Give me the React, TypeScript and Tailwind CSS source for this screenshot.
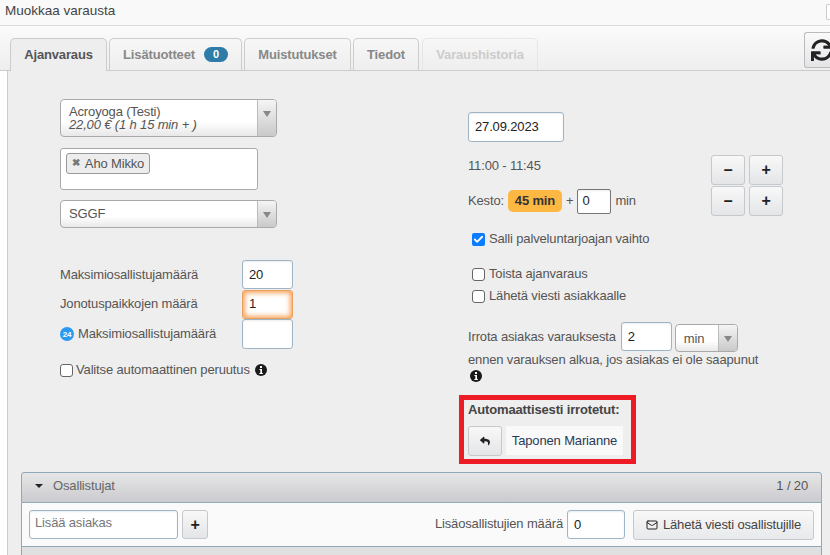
import { Check, Mail } from 'lucide-react'
import { FaReply, FaSync } from 'react-icons/fa'

const font = "[font-family:'Liberation_Sans',Arial,sans-serif]"

function Tab({ label, active, disabled, className, children }: { label: string; active?: boolean; disabled?: boolean; className: string; children?: React.ReactNode }) {
  const color = active ? 'text-[#555] bg-[#eee] border-[#ccc] h-[33px] -mb-px' : disabled ? 'text-[#ccc] border-[#e6e6e6] h-[32px]' : 'text-[#888] border-[#ccc] h-[32px]'
  return (
    <div className={`flex items-center justify-center gap-[9px] rounded-t-[5px] border border-b-0 text-[13px] font-bold ${color} ${className}`}>
      {label}
      {children}
    </div>
  )
}

function SelectArrow({ w = 'w-[19px]' }: { w?: string }) {
  return (
    <div className={`${w} shrink-0 self-stretch flex justify-center pt-[11px] border-l border-[#bbb] bg-gradient-to-b from-[#f5f5f5] to-[#c9c9c9]`}>
      <div className="w-0 h-0 border-x-[4px] border-x-transparent border-t-[6px] border-t-[#888]" />
    </div>
  )
}

function Field({ value, className }: { value?: string; className: string }) {
  return (
    <div className={`bg-white border border-[#9fb4c4] rounded-[3px] pl-[6px] flex items-center text-[13px] text-[#222] shrink-0 shadow-[inset_0_1px_2px_rgba(0,0,0,0.08)] ${className}`}>
      {value}
    </div>
  )
}

function Btn({ label, className = 'w-[34px] h-[30px]', children }: { label?: string; className?: string; children?: React.ReactNode }) {
  return (
    <div className={`flex items-center justify-center rounded-[3px] border border-[#c5c8cc] bg-gradient-to-b from-[#f8f8f8] to-[#e4e5e7] text-[#222] text-[16px] font-bold shrink-0 ${className}`}>
      {label}
      {children}
    </div>
  )
}

function Box({ checked }: { checked?: boolean }) {
  if (checked) {
    return (
      <span className="w-[13px] h-[13px] rounded-[2px] bg-[#0a7cff] flex items-center justify-center shrink-0">
        <Check size={11} strokeWidth={4} className="text-white" />
      </span>
    )
  }
  return <span className="w-[13px] h-[13px] rounded-[3px] border border-[#666] bg-white shrink-0" />
}

function Info({ className = '' }: { className?: string }) {
  return (
    <svg viewBox="0 0 12 12" className={`w-[12px] h-[12px] shrink-0 ${className}`}>
      <circle cx="6" cy="6" r="6" fill="#1a1a1a" />
      <rect x="5" y="2" width="2" height="2" fill="#fff" />
      <path d="M4.4 5h2.6v4h.9v1H4.3V9h1V6h-.9z" fill="#fff" />
    </svg>
  )
}

export default function App() {
  return (
    <div className={`w-[830px] h-[555px] overflow-hidden bg-white text-[13px] tracking-[-0.15px] text-[#555] ${font}`}>
      {/* otsikko */}
      <div className="h-[26px] bg-[#f9f9f9] border-b border-[#ddd] flex justify-between pl-[5px] text-[#444]">
        <span className="pt-[2px] leading-[17px] text-[13.5px] tracking-normal">Muokkaa varausta</span>
        <div className="w-[4px] h-[16px] mt-[4px] border border-r-0 border-[#ccc] rounded-l-[2px] bg-white" />
      </div>

      {/* välilehdet */}
      <div className="h-[45px] flex bg-gradient-to-b from-[#fbfbfb] to-[#eee] border-b border-[#ccc]">
        <div className="flex items-end gap-[2px] pl-[10px]">
          <Tab label="Ajanvaraus" active className="w-[97px]" />
          <Tab label="Lisätuotteet" className="w-[133px]">
            <span className="w-[24px] h-[15px] rounded-full bg-[#2d7da8] text-white text-[11px] leading-[15px] text-center">0</span>
          </Tab>
          <Tab label="Muistutukset" className="w-[107px]" />
          <Tab label="Tiedot" className="w-[66px]" />
          <Tab label="Varaushistoria" disabled className="w-[116px] ml-[1px]" />
        </div>
        <div className="ml-auto mt-[6px] w-[26px] h-[36px] rounded-l-[3px] border border-r-0 border-[#bbb] bg-gradient-to-b from-[#fafafa] to-[#e4e5e7] pl-[6px] pt-[6px] overflow-hidden">
          <FaSync size={22} className="text-[#222] shrink-0" />
        </div>
      </div>

      {/* sisältö */}
      <div className="ml-[7px] h-[484px] bg-[#eee] border-l border-[#ccc]">
        <div className="flex h-[401px]">
          {/* vasen */}
          <div className="w-[460px] pl-[52px] pt-[28px] shrink-0">
            <div className="w-[217px] h-[38px] flex rounded-[4px] border border-[#aaa] overflow-hidden bg-gradient-to-b from-white from-60% to-[#e8e8e8]">
              <div className="flex-1 pl-[8px] pt-[5px] leading-[13px]">
                <div>Acroyoga (Testi)</div>
                <div className="italic">22,00 € (1 h 15 min + )</div>
              </div>
              <SelectArrow />
            </div>
            <div className="w-[198px] h-[42px] mt-[11px] rounded-[3px] border border-[#aaa] bg-white pl-[5px] pt-[3px]">
              <div className="inline-flex items-center gap-[5px] h-[21px] px-[5px] rounded-[3px] border border-[#999] bg-[#ededed] leading-none">
                <span className="text-[#777] text-[10px] font-bold">✖</span>
                <span>Aho Mikko</span>
              </div>
            </div>
            <div className="w-[217px] h-[28px] mt-[10px] flex rounded-[4px] border border-[#aaa] overflow-hidden bg-gradient-to-b from-white from-60% to-[#e8e8e8]">
              <div className="flex-1 pl-[8px] pt-[3px]">SGGF</div>
              <SelectArrow />
            </div>

            <div className="w-[233px] mt-[32px] flex flex-col">
              <div className="flex justify-between items-center h-[29px]">
                <span>Maksimiosallistujamäärä</span>
                <Field value="20" className="w-[51px] h-[29px]" />
              </div>
              <div className="flex justify-between items-center h-[30px]">
                <span>Jonotuspaikkojen määrä</span>
                <Field value="1" className="w-[51px] h-[29px] !border-[#e8a05c] !shadow-[inset_0_0_5px_2px_#f8a45c]" />
              </div>
              <div className="flex justify-between items-center h-[30px]">
                <span className="flex items-center gap-[4px]">
                  <svg viewBox="0 0 14 14" className="w-[14px] h-[14px]">
                    <circle cx="7" cy="7" r="7" fill="#2a9bf0" />
                    <text x="7" y="10" textAnchor="middle" fontSize="8" fontWeight="700" fill="#fff">24</text>
                  </svg>
                  Maksimiosallistujamäärä
                </span>
                <Field className="w-[51px] h-[30px]" />
              </div>
            </div>
            <div className="flex items-center gap-[3px] mt-[13px] h-[16px]">
              <Box />
              <span>Valitse automaattinen peruutus</span>
              <Info className="ml-[2px]" />
            </div>
          </div>

          {/* oikea */}
          <div className="flex-1 flex flex-col pt-[41px]">
            <div className="flex">
              <div className="w-[243px] shrink-0">
                <Field value="27.09.2023" className="w-[96px] h-[30px]" />
                <div className="mt-[16px] h-[16px] leading-[16px]">11:00 - 11:45</div>
              </div>
              <div className="flex flex-col gap-px mt-[43px]">
                <div className="flex gap-[4px]"><Btn label="–" /><Btn label="+" /></div>
                <div className="flex gap-[4px]"><Btn label="–" /><Btn label="+" /></div>
              </div>
            </div>
            <div className="flex items-center h-[24px] -mt-[27px] w-[240px]">
              <span>Kesto:</span>
              <span className="ml-[4px] w-[54px] h-[22px] rounded-[5px] bg-[#fdb843] text-[#333] font-bold flex items-center justify-center">45 min</span>
              <span className="ml-[4px]">+</span>
              <Field value="0" className="ml-[4px] w-[34px] h-[25px] !border-[#777] !rounded-[2px] !pl-[4px]" />
              <span className="ml-[4px]">min</span>
            </div>
            <div className="flex items-center gap-[4px] ml-[4px] mt-[18px] h-[16px]"><Box checked />Salli palveluntarjoajan vaihto</div>
            <div className="flex items-center gap-[4px] ml-[4px] mt-[19px] h-[16px]"><Box />Toista ajanvaraus</div>
            <div className="flex items-center gap-[4px] ml-[4px] mt-[6px] h-[16px]"><Box />Lähetä viesti asiakkaalle</div>
            <div className="flex items-start mt-[18px] h-[30px]">
              <span className="pt-[5px]">Irrota asiakas varauksesta</span>
              <Field value="2" className="ml-[5px] w-[51px] h-[29px]" />
              <div className="ml-[3px] mt-[2px] w-[63px] h-[28px] flex rounded-[4px] border border-[#aaa] overflow-hidden bg-gradient-to-b from-white from-60% to-[#e8e8e8]">
                <div className="flex-1 pl-[8px] pt-[4px]">min</div>
                <SelectArrow />
              </div>
            </div>
            <div className="h-[16px] leading-[16px]">ennen varauksen alkua, jos asiakas ei ole saapunut</div>
            <Info className="ml-[2px] mt-[2px]" />
            {/* punainen korostus */}
            <div className="w-[177px] h-[69px] -ml-[9px] mt-[13px] border-[5px] border-[#ed1c24] pl-[4px] pt-[2px] shrink-0">
              <div className="font-bold text-[#444] leading-[16px] whitespace-nowrap">Automaattisesti irrotetut:</div>
              <div className="flex gap-[4px] mt-[8px]">
                <Btn className="w-[34px] h-[30px]"><FaReply size={10} /></Btn>
                <div className="w-[117px] h-[29px] bg-[#f9f9f9] text-[#2a3a55] flex items-center justify-center">Taponen Marianne</div>
              </div>
            </div>
          </div>
        </div>

        {/* osallistujat */}
        <div className="ml-[13px] w-[801px]">
          <div className="h-[31px] flex items-center justify-between rounded-t-[3px] border border-[#91a8b8] bg-gradient-to-b from-[#e6e6e6] to-[#cbcbd0] pl-[13px] pr-[13px] pb-[3px]">
            <span className="flex items-center gap-[10px]">
              <span className="w-0 h-0 border-x-[4px] border-x-transparent border-t-[4px] border-t-[#222]" />
              <span className="text-[#666]">Osallistujat</span>
            </span>
            <span className="text-[#555]">1 / 20</span>
          </div>
          <div className="h-[43px] flex items-center border-x border-[#91a8b8] bg-[#fafafa] pl-[7px] pr-[7px]">
            <Field value="Lisää asiakas" className="w-[149px] h-[29px] !text-[#777] !pl-[5px] !items-start pt-[2px]" />
            <Btn label="+" className="w-[26px] h-[29px] ml-[4px]" />
            <span className="ml-auto pb-[2px]">Lisäosallistujien määrä</span>
            <Field value="0" className="ml-[4px] w-[58px] h-[29px]" />
            <div className="ml-[8px] w-[181px] h-[30px] rounded-[3px] border border-[#c5c8cc] bg-gradient-to-b from-[#f8f8f8] to-[#e8e9ea] flex items-center justify-center gap-[5px] text-[#444]">
              <Mail size={12} className="text-[#222]" />
              Lähetä viesti osallistujille
            </div>
          </div>
          <div className="h-[12px] border border-b-0 border-[#91a8b8] bg-[#e0e0e0]" />
        </div>
      </div>
    </div>
  )
}
